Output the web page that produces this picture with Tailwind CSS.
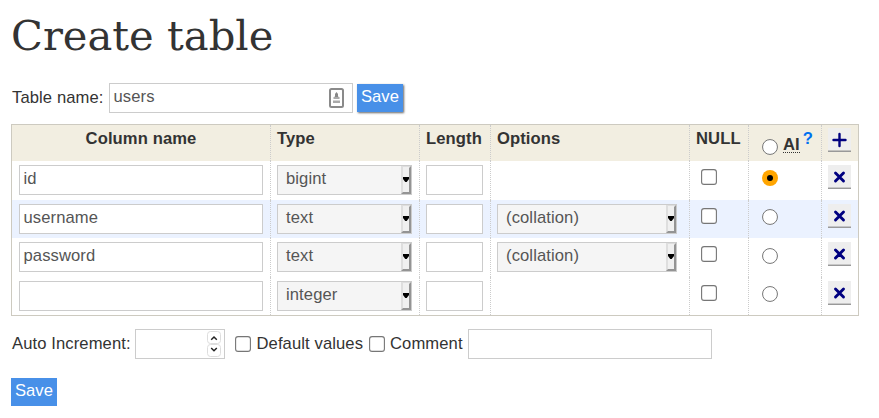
<!DOCTYPE html>
<html lang="en">
<head>
<meta charset="utf-8">
<title>Create table</title>
<script src="https://cdn.jsdelivr.net/npm/@tailwindcss/browser@4"></script>
</head>
<body class="bg-white text-[#333] font-['Liberation_Sans',Arial,sans-serif] text-[16.6px] leading-[20px] tracking-[0.1px]">
<svg class="hidden">
  <symbol id="drop" viewBox="0 0 10 28">
    <rect width="10" height="28" fill="#f0f0f0"/>
    <path d="M0 0H10L9 1H1V27L0 28Z" fill="#dedede"/>
    <path d="M0 0H2V26L0 28Z" fill="#dedede"/>
    <path d="M10 0V28H0L2 26H8V2Z" fill="#949494"/>
    <path d="M2 11H8V13L5.700 16H4.300L2 13Z" fill="#000"/>
  </symbol>
  <symbol id="cross" viewBox="0 0 23 24">
    <path d="M0 0H23V22.500H0Z" fill="#eee"/><path d="M0 22.500H23V24H0Z" fill="#999"/>
    <path d="M7.500 8L15.500 16M15.500 8L7.500 16" stroke="#000080" stroke-width="2.900" stroke-linecap="round"/>
  </symbol>
  <symbol id="plus" viewBox="0 0 23 24">
    <path d="M0 0H23V22.500H0Z" fill="#eee"/><path d="M0 22.500H23V24H0Z" fill="#999"/>
    <path d="M11.500 6V18M5.500 12H17.500" stroke="#000080" stroke-width="2.400" stroke-linecap="round"/>
  </symbol>
  <symbol id="box" viewBox="0 0 16 16"><rect x=".6" y=".6" width="14.800" height="14.800" rx="2.500" fill="#fff" stroke="#767676" stroke-width="1.100"/></symbol>
  <symbol id="radio" viewBox="0 0 16 16"><circle cx="8" cy="8" r="7.450" fill="#fff" stroke="#767676"/></symbol>
  <symbol id="radio-on" viewBox="0 0 16 16"><circle cx="8" cy="8" r="8" fill="#ffa500"/><circle cx="8" cy="8" r="3" fill="#000"/></symbol>
</svg>

<main class="pl-[11px] pt-[11px]">
  <h1 class="h-[72px] font-['DejaVu_Serif',serif] text-[41.7px] tracking-normal leading-[49px] whitespace-nowrap">Create table</h1>

  <div class="flex h-[30px]">
    <label class="w-[98px] pt-[5px] pl-px whitespace-nowrap">Table name:</label>
    <div class="flex justify-between w-[244px] border border-[#ccc] pl-[3.5px] pt-[3px] text-[#555] whitespace-nowrap">
      <span>users</span>
      <svg class="w-[15px] h-[20px] mr-[8px] mt-px" viewBox="0 0 15 20"><rect x="1" y="1" width="13" height="18" rx="1.500" fill="#fff" stroke="#8a8a8a" stroke-width="2"/><path d="M7.500 4L9 6V8L10 10H5L6 8V6Z" fill="#888"/><path d="M4.500 9H10.500V11H4.500ZM4 12.500H11V15H4Z" fill="#aaa"/></svg>
    </div>
    <button class="ml-[4px] mt-px w-[46px] h-[28px] bg-[#4890e8] text-white pb-[2px] shadow-[1px_1px_2px_#666] whitespace-nowrap">Save</button>
  </div>

  <section class="mt-[11px] w-[848px] border border-[#cdcac0] text-[#555] [&_span]:whitespace-nowrap">
    <div class="grid grid-cols-[259px_149px_71px_199px_59px_73px_36px] h-[36px] bg-[#f2eee1] text-[#333] font-bold leading-[20px] *:border-dotted *:border-[#ccc]">
      <div class="border-r text-center pt-[4px]"><span>Column name</span></div>
      <div class="border-r pl-[6px] pt-[4px]"><span>Type</span></div>
      <div class="border-r pl-[6px] pt-[4px]"><span>Length</span></div>
      <div class="border-r pl-[6px] pt-[4px]"><span>Options</span></div>
      <div class="border-r pl-[6px] pt-[4px]"><span>NULL</span></div>
      <div class="border-r pl-[13px] flex items-start"><svg class="size-[16px] mt-[14px] shrink-0"><use href="#radio"/></svg><span class="ml-[5px] mt-[10px] h-[18px] border-b border-dotted !border-[#333]">AI</span><span class="ml-[3px] mt-[4px] text-[#0070f0]">?</span></div>
      <div class="pl-[6px] pt-[3px]"><svg class="w-[23px] h-[24px]"><use href="#plus"/></svg></div>
    </div>

    <div class="grid grid-cols-[259px_149px_71px_199px_59px_73px_36px] h-[39px] *:border-dotted *:border-[#ccc]">
      <div class="border-r pl-[7px] pt-[4px]"><div class="w-[244px] h-[30px] border border-[#ccc] bg-white pl-[3.5px] pt-[3px]"><span>id</span></div></div>
      <div class="border-r pl-[6px] pt-[4px]"><div class="w-[135px] h-[30px] border border-[#ccc] bg-[#f5f5f5] pl-[8px] flex justify-between"><span class="pt-[3px]">bigint</span><svg class="w-[10px] h-[28px]"><use href="#drop"/></svg></div></div>
      <div class="border-r pl-[6px] pt-[4px]"><div class="w-[57px] h-[30px] border border-[#ccc] bg-white"></div></div>
      <div class="border-r"></div>
      <div class="border-r pl-[11px] pt-[8px]"><svg class="size-[16px]"><use href="#box"/></svg></div>
      <div class="border-r pl-[13px] pt-[9px]"><svg class="size-[16px]"><use href="#radio-on"/></svg></div>
      <div class="pl-[6px] pt-[4px]"><svg class="w-[23px] h-[24px]"><use href="#cross"/></svg></div>
    </div>

    <div class="grid grid-cols-[259px_149px_71px_199px_59px_73px_36px] h-[38px] bg-[#ebf2ff] *:border-dotted *:border-[#ccc]">
      <div class="border-r pl-[7px] pt-[4px]"><div class="w-[244px] h-[30px] border border-[#ccc] bg-white pl-[3.5px] pt-[3px]"><span>username</span></div></div>
      <div class="border-r pl-[6px] pt-[4px]"><div class="w-[135px] h-[30px] border border-[#ccc] bg-[#f5f5f5] pl-[8px] flex justify-between"><span class="pt-[3px]">text</span><svg class="w-[10px] h-[28px]"><use href="#drop"/></svg></div></div>
      <div class="border-r pl-[6px] pt-[4px]"><div class="w-[57px] h-[30px] border border-[#ccc] bg-white"></div></div>
      <div class="border-r pl-[6px] pt-[4px]"><div class="w-[180px] h-[30px] border border-[#ccc] bg-[#f5f5f5] pl-[8px] flex justify-between"><span class="pt-[3px]">(collation)</span><svg class="w-[10px] h-[28px]"><use href="#drop"/></svg></div></div>
      <div class="border-r pl-[11px] pt-[8px]"><svg class="size-[16px]"><use href="#box"/></svg></div>
      <div class="border-r pl-[13px] pt-[9px]"><svg class="size-[16px]"><use href="#radio"/></svg></div>
      <div class="pl-[6px] pt-[4px]"><svg class="w-[23px] h-[24px]"><use href="#cross"/></svg></div>
    </div>

    <div class="grid grid-cols-[259px_149px_71px_199px_59px_73px_36px] h-[39px] *:border-dotted *:border-[#ccc]">
      <div class="border-r pl-[7px] pt-[4px]"><div class="w-[244px] h-[30px] border border-[#ccc] bg-white pl-[3.5px] pt-[3px]"><span>password</span></div></div>
      <div class="border-r pl-[6px] pt-[4px]"><div class="w-[135px] h-[30px] border border-[#ccc] bg-[#f5f5f5] pl-[8px] flex justify-between"><span class="pt-[3px]">text</span><svg class="w-[10px] h-[28px]"><use href="#drop"/></svg></div></div>
      <div class="border-r pl-[6px] pt-[4px]"><div class="w-[57px] h-[30px] border border-[#ccc] bg-white"></div></div>
      <div class="border-r pl-[6px] pt-[4px]"><div class="w-[180px] h-[30px] border border-[#ccc] bg-[#f5f5f5] pl-[8px] flex justify-between"><span class="pt-[3px]">(collation)</span><svg class="w-[10px] h-[28px]"><use href="#drop"/></svg></div></div>
      <div class="border-r pl-[11px] pt-[8px]"><svg class="size-[16px]"><use href="#box"/></svg></div>
      <div class="border-r pl-[13px] pt-[10px]"><svg class="size-[16px]"><use href="#radio"/></svg></div>
      <div class="pl-[6px] pt-[4px]"><svg class="w-[23px] h-[24px]"><use href="#cross"/></svg></div>
    </div>

    <div class="grid grid-cols-[259px_149px_71px_199px_59px_73px_36px] h-[38px] *:border-dotted *:border-[#ccc]">
      <div class="border-r pl-[7px] pt-[4px]"><div class="w-[244px] h-[30px] border border-[#ccc] bg-white"></div></div>
      <div class="border-r pl-[6px] pt-[4px]"><div class="w-[135px] h-[30px] border border-[#ccc] bg-[#f5f5f5] pl-[8px] flex justify-between"><span class="pt-[3px]">integer</span><svg class="w-[10px] h-[28px]"><use href="#drop"/></svg></div></div>
      <div class="border-r pl-[6px] pt-[4px]"><div class="w-[57px] h-[30px] border border-[#ccc] bg-white"></div></div>
      <div class="border-r"></div>
      <div class="border-r pl-[11px] pt-[8px]"><svg class="size-[16px]"><use href="#box"/></svg></div>
      <div class="border-r pl-[13px] pt-[9px]"><svg class="size-[16px]"><use href="#radio"/></svg></div>
      <div class="pl-[6px] pt-[4px]"><svg class="w-[23px] h-[24px]"><use href="#cross"/></svg></div>
    </div>
  </section>

  <div class="mt-[13px] flex h-[30px] whitespace-nowrap">
    <label class="w-[124px] pt-[5px] pl-px">Auto Increment:</label>
    <div class="w-[90px] border border-[#ccc] flex justify-end pr-[3px] pt-px">
      <svg class="w-[14px] h-[26px]" viewBox="0 0 14 26" fill="none"><rect x=".5" y=".5" width="13" height="12" rx="3" stroke="#ddd"/><rect x=".5" y="13.500" width="13" height="12" rx="3" stroke="#ddd"/><path d="M4.200 8.700L7 6L9.800 8.700M4.200 17L7 19.700L9.800 17" stroke="#222" stroke-width="1.500"/></svg>
    </div>
    <svg class="size-[16px] ml-[10px] mt-[7px]"><use href="#box"/></svg>
    <label class="w-[118px] pl-[5.5px] pt-[5px]">Default values</label>
    <svg class="size-[16px] mt-[7px]"><use href="#box"/></svg>
    <label class="w-[83px] pl-[5px] pt-[5px]">Comment</label>
    <div class="w-[244px] border border-[#ccc]"></div>
  </div>

  <button class="mt-[19px] block w-[46px] h-[28px] bg-[#4890e8] text-white pb-[2px] whitespace-nowrap">Save</button>
</main>
</body>
</html>
